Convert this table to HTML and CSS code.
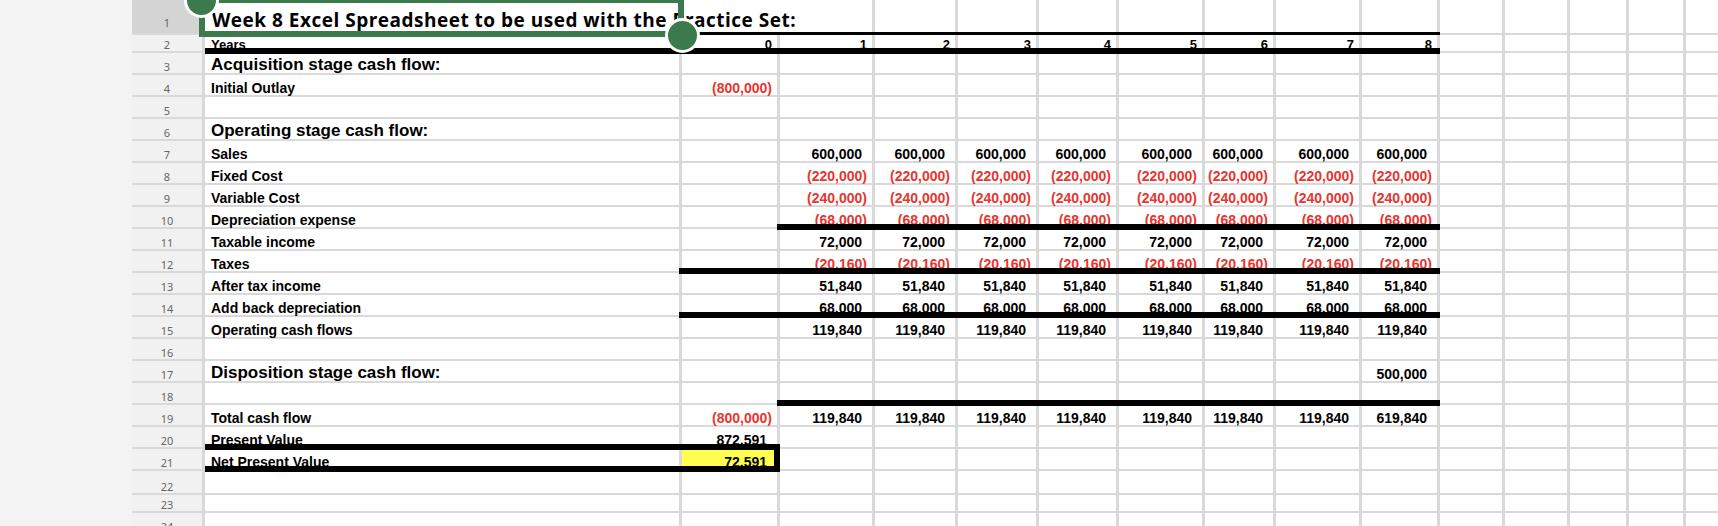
FILE: index.html
```html
<!DOCTYPE html>
<html>
<head>
<meta charset="utf-8">
<link rel="stylesheet" href="styles.css">
</head>
<body>
<div class="sheet">
<!-- row 1 -->
<div class="h sel">1</div><div class="c title">Week 8 Excel Spreadsheet to be used with the Practice Set:</div><div class="c"></div><div class="c"></div><div class="c"></div><div class="c"></div><div class="c"></div><div class="c"></div><div class="c"></div><div class="c"></div><div class="c"></div><div class="c"></div><div class="c"></div><div class="c"></div>
<!-- row 2 -->
<div class="h">2</div><div class="c l yr tl bb first">Years</div><div class="c n yr tl bb">0</div><div class="c n yr tl bb">1</div><div class="c n yr tl bb">2</div><div class="c n yr tl bb">3</div><div class="c n yr tl bb">4</div><div class="c n yr tl bb">5</div><div class="c n yr tl bb">6</div><div class="c n yr tl bb">7</div><div class="c n yr tl bb">8</div><div class="c"></div><div class="c"></div><div class="c"></div><div class="c"></div><div class="c"></div>
<!-- row 3 -->
<div class="h">3</div><div class="c l t">Acquisition stage cash flow:</div><div class="c"></div><div class="c"></div><div class="c"></div><div class="c"></div><div class="c"></div><div class="c"></div><div class="c"></div><div class="c"></div><div class="c"></div><div class="c"></div><div class="c"></div><div class="c"></div><div class="c"></div><div class="c"></div>
<!-- row 4 -->
<div class="h">4</div><div class="c l">Initial Outlay</div><div class="c n neg">(800,000)</div><div class="c"></div><div class="c"></div><div class="c"></div><div class="c"></div><div class="c"></div><div class="c"></div><div class="c"></div><div class="c"></div><div class="c"></div><div class="c"></div><div class="c"></div><div class="c"></div><div class="c"></div>
<!-- row 5 -->
<div class="h">5</div><div class="c"></div><div class="c"></div><div class="c"></div><div class="c"></div><div class="c"></div><div class="c"></div><div class="c"></div><div class="c"></div><div class="c"></div><div class="c"></div><div class="c"></div><div class="c"></div><div class="c"></div><div class="c"></div><div class="c"></div>
<!-- row 6 -->
<div class="h">6</div><div class="c l t">Operating stage cash flow:</div><div class="c"></div><div class="c"></div><div class="c"></div><div class="c"></div><div class="c"></div><div class="c"></div><div class="c"></div><div class="c"></div><div class="c"></div><div class="c"></div><div class="c"></div><div class="c"></div><div class="c"></div><div class="c"></div>
<!-- row 7 -->
<div class="h">7</div><div class="c l">Sales</div><div class="c"></div><div class="c p">600,000</div><div class="c p">600,000</div><div class="c p">600,000</div><div class="c p">600,000</div><div class="c p">600,000</div><div class="c p">600,000</div><div class="c p">600,000</div><div class="c p">600,000</div><div class="c"></div><div class="c"></div><div class="c"></div><div class="c"></div><div class="c"></div>
<!-- row 8 -->
<div class="h">8</div><div class="c l">Fixed Cost</div><div class="c"></div><div class="c n neg">(220,000)</div><div class="c n neg">(220,000)</div><div class="c n neg">(220,000)</div><div class="c n neg">(220,000)</div><div class="c n neg">(220,000)</div><div class="c n neg">(220,000)</div><div class="c n neg">(220,000)</div><div class="c n neg">(220,000)</div><div class="c"></div><div class="c"></div><div class="c"></div><div class="c"></div><div class="c"></div>
<!-- row 9 -->
<div class="h">9</div><div class="c l">Variable Cost</div><div class="c"></div><div class="c n neg">(240,000)</div><div class="c n neg">(240,000)</div><div class="c n neg">(240,000)</div><div class="c n neg">(240,000)</div><div class="c n neg">(240,000)</div><div class="c n neg">(240,000)</div><div class="c n neg">(240,000)</div><div class="c n neg">(240,000)</div><div class="c"></div><div class="c"></div><div class="c"></div><div class="c"></div><div class="c"></div>
<!-- row 10 -->
<div class="h">10</div><div class="c l">Depreciation expense</div><div class="c"></div><div class="c n neg bb">(68,000)</div><div class="c n neg bb">(68,000)</div><div class="c n neg bb">(68,000)</div><div class="c n neg bb">(68,000)</div><div class="c n neg bb">(68,000)</div><div class="c n neg bb">(68,000)</div><div class="c n neg bb">(68,000)</div><div class="c n neg bb">(68,000)</div><div class="c"></div><div class="c"></div><div class="c"></div><div class="c"></div><div class="c"></div>
<!-- row 11 -->
<div class="h">11</div><div class="c l">Taxable income</div><div class="c"></div><div class="c p">72,000</div><div class="c p">72,000</div><div class="c p">72,000</div><div class="c p">72,000</div><div class="c p">72,000</div><div class="c p">72,000</div><div class="c p">72,000</div><div class="c p">72,000</div><div class="c"></div><div class="c"></div><div class="c"></div><div class="c"></div><div class="c"></div>
<!-- row 12 -->
<div class="h">12</div><div class="c l">Taxes</div><div class="c bb"></div><div class="c n neg bb">(20,160)</div><div class="c n neg bb">(20,160)</div><div class="c n neg bb">(20,160)</div><div class="c n neg bb">(20,160)</div><div class="c n neg bb">(20,160)</div><div class="c n neg bb">(20,160)</div><div class="c n neg bb">(20,160)</div><div class="c n neg bb">(20,160)</div><div class="c"></div><div class="c"></div><div class="c"></div><div class="c"></div><div class="c"></div>
<!-- row 13 -->
<div class="h">13</div><div class="c l">After tax income</div><div class="c"></div><div class="c p">51,840</div><div class="c p">51,840</div><div class="c p">51,840</div><div class="c p">51,840</div><div class="c p">51,840</div><div class="c p">51,840</div><div class="c p">51,840</div><div class="c p">51,840</div><div class="c"></div><div class="c"></div><div class="c"></div><div class="c"></div><div class="c"></div>
<!-- row 14 -->
<div class="h">14</div><div class="c l">Add back depreciation</div><div class="c bb"></div><div class="c p bb">68,000</div><div class="c p bb">68,000</div><div class="c p bb">68,000</div><div class="c p bb">68,000</div><div class="c p bb">68,000</div><div class="c p bb">68,000</div><div class="c p bb">68,000</div><div class="c p bb">68,000</div><div class="c"></div><div class="c"></div><div class="c"></div><div class="c"></div><div class="c"></div>
<!-- row 15 -->
<div class="h">15</div><div class="c l">Operating cash flows</div><div class="c"></div><div class="c p">119,840</div><div class="c p">119,840</div><div class="c p">119,840</div><div class="c p">119,840</div><div class="c p">119,840</div><div class="c p">119,840</div><div class="c p">119,840</div><div class="c p">119,840</div><div class="c"></div><div class="c"></div><div class="c"></div><div class="c"></div><div class="c"></div>
<!-- row 16 -->
<div class="h">16</div><div class="c"></div><div class="c"></div><div class="c"></div><div class="c"></div><div class="c"></div><div class="c"></div><div class="c"></div><div class="c"></div><div class="c"></div><div class="c"></div><div class="c"></div><div class="c"></div><div class="c"></div><div class="c"></div><div class="c"></div>
<!-- row 17 -->
<div class="h">17</div><div class="c l t">Disposition stage cash flow:</div><div class="c"></div><div class="c"></div><div class="c"></div><div class="c"></div><div class="c"></div><div class="c"></div><div class="c"></div><div class="c"></div><div class="c p">500,000</div><div class="c"></div><div class="c"></div><div class="c"></div><div class="c"></div><div class="c"></div>
<!-- row 18 -->
<div class="h">18</div><div class="c"></div><div class="c"></div><div class="c bb"></div><div class="c bb"></div><div class="c bb"></div><div class="c bb"></div><div class="c bb"></div><div class="c bb"></div><div class="c bb"></div><div class="c bb"></div><div class="c"></div><div class="c"></div><div class="c"></div><div class="c"></div><div class="c"></div>
<!-- row 19 -->
<div class="h">19</div><div class="c l">Total cash flow</div><div class="c n neg">(800,000)</div><div class="c p">119,840</div><div class="c p">119,840</div><div class="c p">119,840</div><div class="c p">119,840</div><div class="c p">119,840</div><div class="c p">119,840</div><div class="c p">119,840</div><div class="c p">619,840</div><div class="c"></div><div class="c"></div><div class="c"></div><div class="c"></div><div class="c"></div>
<!-- row 20 -->
<div class="h">20</div><div class="c l bb first">Present Value</div><div class="c p bb">872,591</div><div class="c"></div><div class="c"></div><div class="c"></div><div class="c"></div><div class="c"></div><div class="c"></div><div class="c"></div><div class="c"></div><div class="c"></div><div class="c"></div><div class="c"></div><div class="c"></div><div class="c"></div>
<!-- row 21 -->
<div class="h">21</div><div class="c l bb first">Net Present Value</div><div class="c p bb br yel">72,591</div><div class="c"></div><div class="c"></div><div class="c"></div><div class="c"></div><div class="c"></div><div class="c"></div><div class="c"></div><div class="c"></div><div class="c"></div><div class="c"></div><div class="c"></div><div class="c"></div><div class="c"></div>
<!-- row 22 -->
<div class="h">22</div><div class="c"></div><div class="c"></div><div class="c"></div><div class="c"></div><div class="c"></div><div class="c"></div><div class="c"></div><div class="c"></div><div class="c"></div><div class="c"></div><div class="c"></div><div class="c"></div><div class="c"></div><div class="c"></div><div class="c"></div>
<!-- row 23 -->
<div class="h">23</div><div class="c"></div><div class="c"></div><div class="c"></div><div class="c"></div><div class="c"></div><div class="c"></div><div class="c"></div><div class="c"></div><div class="c"></div><div class="c"></div><div class="c"></div><div class="c"></div><div class="c"></div><div class="c"></div><div class="c"></div>
<!-- row 24 -->
<div class="h">24</div><div class="c"></div><div class="c"></div><div class="c"></div><div class="c"></div><div class="c"></div><div class="c"></div><div class="c"></div><div class="c"></div><div class="c"></div><div class="c"></div><div class="c"></div><div class="c"></div><div class="c"></div><div class="c"></div><div class="c"></div>

<div class="selbox"></div>
<div class="handle tlh"></div>
<div class="handle brh"></div>
</div>
</body>
</html>
```
FILE: styles.css
```css
* { box-sizing: border-box; }
html, body {
  margin: 0;
  width: 1718px;
  height: 526px;
  overflow: hidden;
  background: #f3f3f3;
}
.sheet {
  margin-left: 132px;
  position: relative;
  display: grid;
  grid-template-columns: 70px 474px 95px 92px 80px 78px 77px 83px 68px 83px 75px 62px 62px 56px 54px 60px;
  grid-template-rows: 33px 16px repeat(19, 20px) 22px 16px 20px;
  column-gap: 3px;
  row-gap: 2px;
  background: #d9d9d9;
  font-family: "Liberation Sans", Arial, sans-serif;
  font-weight: 700;
  font-size: 14px;
  line-height: 14px;
  color: #000;
}
.h {
  background: #f1f1f1;
  display: flex;
  align-items: flex-end;
  justify-content: center;
  font-family: "Noto Sans", sans-serif;
  font-weight: 400;
  font-size: 11px;
  line-height: 11px;
  color: #666;
  padding-bottom: 1px;
}
.h.sel {
  background: #d4d4d4;
  padding-bottom: 5px;
}
.c {
  background: #fff;
  display: flex;
  align-items: flex-end;
  white-space: nowrap;
  min-width: 0;
}
.l { padding-left: 6px; }
.n { justify-content: flex-end; padding-right: 5px; }
.p { justify-content: flex-end; padding-right: 10px; }
.neg { color: #e8352f; }
.yel { background: #ffff52; }
.t { font-size: 17px; line-height: 17px; }
.yr { font-size: 13px; line-height: 13px; }
.title {
  grid-column: span 3;
  font-family: "Open Sans", sans-serif;
  font-weight: 700;
  font-size: 19px;
  line-height: 19px;
  letter-spacing: 0.5px;
  padding: 0 0 3px 7px;
}
.bb, .tl, .br { position: relative; }
.bb::after {
  content: "";
  position: absolute;
  left: -3px;
  right: -3px;
  bottom: -3px;
  height: 6px;
  background: #000;
  z-index: 2;
}
.bb.first::after { left: 0; }
.tl::before {
  content: "";
  position: absolute;
  left: -3px;
  right: -3px;
  top: -3px;
  height: 3px;
  background: #000;
  z-index: 2;
}
.tl.first::before { left: 0; }
.br::before {
  content: "";
  position: absolute;
  right: -3px;
  width: 6px;
  top: -5px;
  bottom: -3px;
  background: #000;
  z-index: 2;
}
.selbox {
  position: absolute;
  left: 67px;
  top: -3px;
  width: 485px;
  height: 40px;
  border: 6px solid #3c7a4e;
  z-index: 3;
}
.handle {
  position: absolute;
  width: 35px;
  height: 35px;
  border-radius: 50%;
  background: #3c7a4e;
  border: 3.5px solid #fff;
  z-index: 4;
}
.tlh { left: 51.5px; top: -17.5px; }
.brh { left: 532.5px; top: 17.5px; }
```
